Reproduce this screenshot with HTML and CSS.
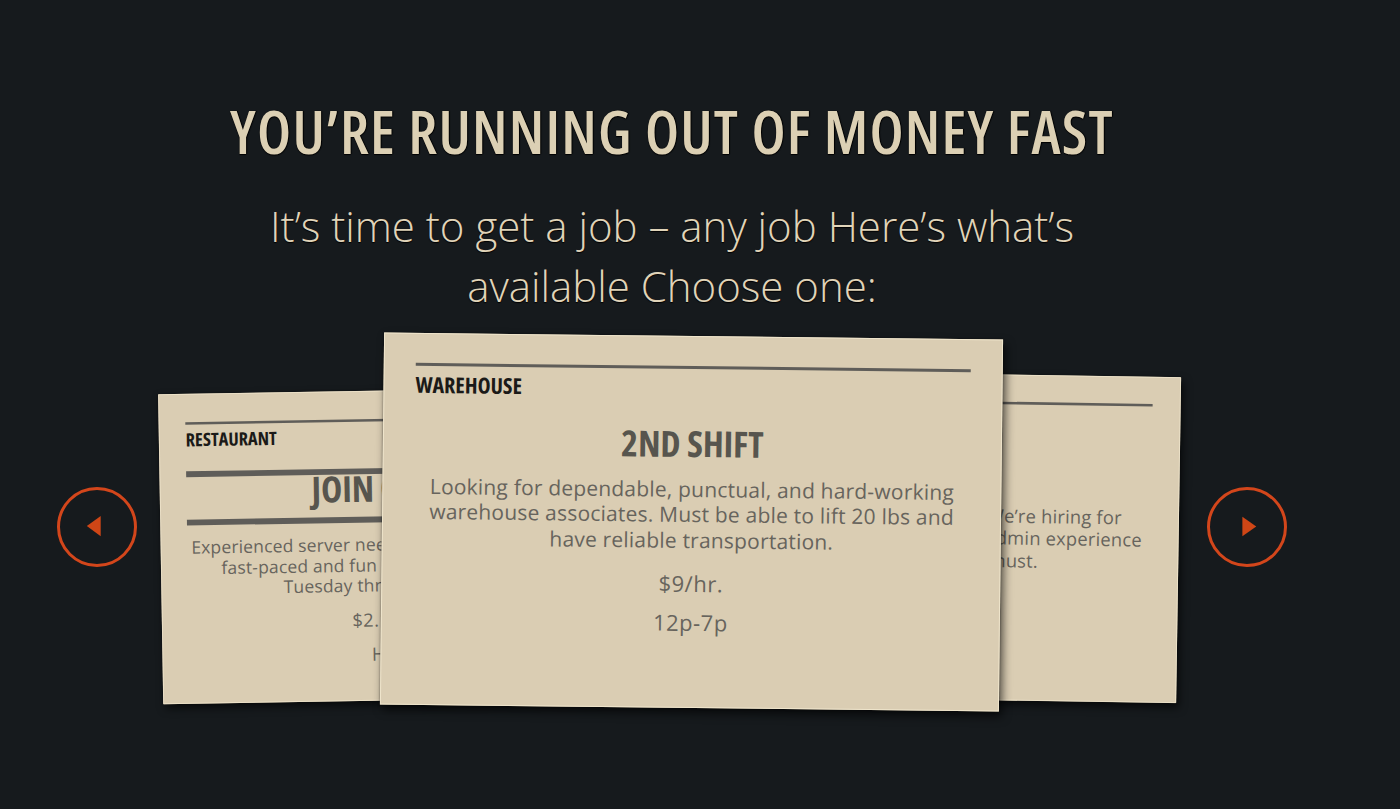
FILE: index.html
```html
<!DOCTYPE html>
<html lang="en">
<head>
<meta charset="utf-8">
<title>Choose a job</title>
<link rel="stylesheet" href="styles.css">
</head>
<body>
<main class="page">
  <h1 class="headline">YOU’RE RUNNING OUT OF MONEY FAST</h1>
  <p class="lede">It’s time to get a job – any job Here’s what’s available Choose one:</p>

  <section class="carousel">
    <button class="nav nav--prev" aria-label="Previous job">
      <svg viewBox="0 0 80 80" width="74" height="74"><polygon points="44,28 29,39 44,50"/></svg>
    </button>

    <div class="stage">
      <article class="card card--left">
        <div class="card-cat">RESTAURANT</div>
        <h2 class="card-title card-title--ruled">JOIN OUR TEAM</h2>
        <p class="card-desc">Experienced server needed to join our family team in a<br>fast-paced and fun atmosphere. Shifts available<br>Tuesday through Saturday night.</p>
        <p class="card-line">$2.13/hr. + tips</p>
        <p class="card-line">Hours vary</p>
      </article>

      <article class="card card--right">
        <div class="card-cat">OFFICE</div>
        <h2 class="card-title">CLERK</h2>
        <p class="card-desc">Busy insurance office downtown. We’re hiring for<br>a new front desk receptionist. Prior admin experience<br>and great phone skills a must.</p>
        <p class="card-line">$10/hr.</p>
        <p class="card-line">8a-5p</p>
      </article>

      <article class="card card--center">
        <div class="card-cat">WAREHOUSE</div>
        <h2 class="card-title">2ND SHIFT</h2>
        <p class="card-desc">Looking for dependable, punctual, and hard-working warehouse associates. Must be able to lift 20 lbs and have reliable transportation.</p>
        <p class="card-line card-line--pay">$9/hr.</p>
        <p class="card-line">12p-7p</p>
      </article>
    </div>

    <button class="nav nav--next" aria-label="Next job">
      <svg viewBox="0 0 80 80" width="74" height="74"><polygon points="35,29 50,39.5 35,50"/></svg>
    </button>
  </section>
</main>
</body>
</html>
```
FILE: styles.css
```css
* { box-sizing: border-box; }

html, body {
  margin: 0;
  height: 100%;
}

body {
  background: #161a1d;
  overflow: hidden;
  font-family: "Open Sans", sans-serif;
  font-stretch: 75%;
}

.page {
  display: flex;
  flex-direction: column;
  align-items: center;
  padding: 101px 56px 0 0;
}

.headline {
  margin: 0;
  font-size: 60px;
  line-height: 60px;
  font-weight: 600;
  letter-spacing: 1.2px;
  color: #dcd0b4;
  text-shadow: 0 1px 1px #000, 1px 0 1px #000;
}

.lede {
  margin: 35px 0 0;
  width: 850px;
  text-align: center;
  font-stretch: 100%;
  font-size: 42px;
  line-height: 60px;
  font-weight: 300;
  letter-spacing: 0;
  color: #e0d4b9;
  text-shadow: 0 1px 1px #000;
}

.carousel {
  align-self: stretch;
  display: flex;
  align-items: center;
  padding-left: 57px;
  margin-top: 6px;
}

.nav {
  flex: none;
  width: 80px;
  height: 80px;
  padding: 0;
  border: 3px solid #d3461b;
  border-radius: 50%;
  background: transparent;
  display: flex;
  align-items: center;
  justify-content: center;
  cursor: pointer;
}

.nav svg { display: block; fill: #cf4616; }

.stage {
  position: relative;
  flex: none;
  width: 1070px;
  height: 410px;
}

.card {
  position: absolute;
  width: 619px;
  height: 372px;
  padding: 29px 31px 0;
  background: #dacdb3;
  border: 1px solid #efe5cc;
  text-align: center;
  box-shadow: 3px 5px 10px rgba(0, 0, 0, 0.65), 0 0 2px rgba(0, 0, 0, 0.5);
}

.card--center {
  left: 245px;
  top: 14px;
  transform: rotate(0.65deg);
  z-index: 3;
}

.card--left {
  left: -28px;
  top: 37px;
  transform: scale(0.833) rotate(-0.95deg);
  z-index: 1;
  padding-top: 33px;
}

.card--right {
  left: 461px;
  top: 28px;
  transform: scale(0.876) rotate(0.88deg);
  z-index: 2;
  padding-top: 30px;
}

.card-cat {
  border-top: 3px solid #5f5d59;
  padding-top: 6.5px;
  text-align: left;
  font-size: 22px;
  line-height: 23px;
  font-weight: 700;
  color: #1b1a18;
}

.card--left .card-cat { padding-top: 6px; }

.card-title {
  margin: 27px 0 0;
  font-size: 36px;
  line-height: 36px;
  font-weight: 700;
  color: #57554e;
}

.card-title--ruled {
  margin-top: 27px;
  border-top: 7px solid #5f5d59;
  border-bottom: 7px solid #5f5d59;
  padding-bottom: 18px;
  font-size: 43px;
  line-height: 33px;
}

.card-desc {
  margin: 15px auto 0;
  max-width: 550px;
  font-stretch: 100%;
  font-size: 21px;
  line-height: 25.5px;
  letter-spacing: 0.2px;
  color: #67645d;
}

.card--left .card-desc,
.card--right .card-desc { max-width: none; margin-left: -40px; margin-right: -40px; }

.card--left .card-desc { margin-top: 14px; line-height: 24.5px; }
.card--right .card-desc { margin-top: 22px; }

.card-line {
  margin: 15px 0 0;
  font-stretch: 100%;
  font-size: 22px;
  line-height: 25.5px;
  letter-spacing: 0.5px;
  color: #67645d;
}

.card--left .card-line { margin-top: 16px; }

.card-line--pay { margin-top: 17.5px; }
.card-line--pay + .card-line { margin-top: 14px; }
```
